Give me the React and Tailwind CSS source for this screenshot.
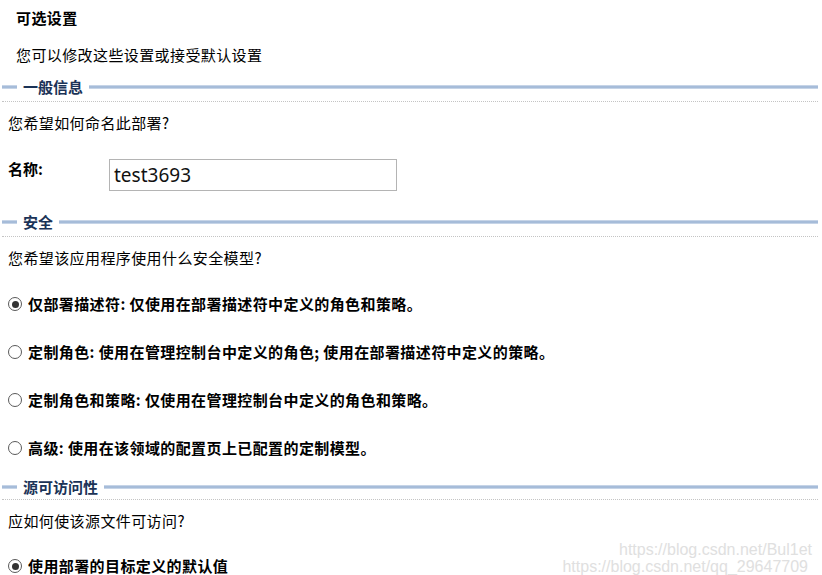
import React from "react";

const cjk = { fontFamily: '"Noto Sans CJK SC", "Noto Sans", sans-serif' };

function SectionHeader({ title, mb = "mb-[4px]" }) {
  return (
    <div className={`h-[20px] flex items-center pl-[2px] pr-[4px] ${mb}`}>
      <div className="w-[15px] h-[4px] bg-[#a6bcd9] border-y border-[#c6d4e7]" />
      <div className="px-[6px] text-[15px] leading-[20px] font-bold text-[#1b3357]">{title}</div>
      <div className="flex-1 h-[4px] bg-[#a6bcd9] border-y border-[#c6d4e7]" />
    </div>
  );
}

function Dotted() {
  return <div className="mx-[2px] mr-[4px] border-t border-dotted border-[#c4c4c4]" />;
}

function Radio({ checked, children, className = "" }) {
  return (
    <div className={`flex items-center h-[20px] pl-[8px] ${className}`}>
      <span className="w-[14px] h-[14px] rounded-full border border-[#5a5a5a] bg-white flex items-center justify-center">
        {checked && <span className="w-[7px] h-[7px] rounded-full bg-[#333]" />}
      </span>
      <span className="ml-[6px] text-[15px] leading-[20px] font-bold tracking-[0.4px] text-black">{children}</span>
    </div>
  );
}

export default function App() {
  return (
    <div className="relative w-[822px] h-[575px] overflow-hidden bg-white text-black" style={cjk}>
      <div className="pt-[8px]">
        <div className="pl-[16px] text-[15px] leading-[20px] font-bold tracking-[0.4px]">可选设置</div>
        <div className="pl-[16px] mt-[17px] text-[15px] leading-[20px] tracking-[0.4px]">您可以修改这些设置或接受默认设置</div>

        <div className="mt-[12px]">
          <SectionHeader title="一般信息" />
          <Dotted />
        </div>
        <div className="pl-[8px] mt-[11px] text-[15px] leading-[20px] tracking-[0.4px]">您希望如何命名此部署?</div>

        <div className="flex mt-[26px] h-[32px]">
          <div className="pl-[8px] w-[109px] text-[15px] leading-[20px] font-bold">名称:</div>
          <div
            className="w-[288px] h-[32px] border border-[#b4b4b4] flex items-center pl-[4px] pt-[1px] text-[19px] text-[#111]"
            style={{ fontFamily: '"Noto Sans", sans-serif' }}
          >
            test3693
          </div>
        </div>

        <div className="mt-[21px]">
          <SectionHeader title="安全" />
          <Dotted />
        </div>
        <div className="pl-[8px] mt-[11px] text-[15px] leading-[20px] tracking-[0.4px]">您希望该应用程序使用什么安全模型?</div>

        <Radio checked className="mt-[26px]">仅部署描述符: 仅使用在部署描述符中定义的角色和策略。</Radio>
        <Radio className="mt-[28px]">定制角色: 使用在管理控制台中定义的角色; 使用在部署描述符中定义的策略。</Radio>
        <Radio className="mt-[28px]">定制角色和策略: 仅使用在管理控制台中定义的角色和策略。</Radio>
        <Radio className="mt-[28px]">高级: 使用在该领域的配置页上已配置的定制模型。</Radio>

        <div className="mt-[19px]">
          <SectionHeader title="源可访问性" mb="mb-[2px]" />
          <Dotted />
        </div>
        <div className="pl-[8px] mt-[11px] text-[15px] leading-[20px] tracking-[0.4px]">应如何使该源文件可访问?</div>

        <Radio checked className="mt-[25px]">使用部署的目标定义的默认值</Radio>
      </div>

      <div
        className="absolute right-[10px] top-[541px] text-[16px] leading-[17px] text-[#e0e0e0] text-right"
        style={{ fontFamily: '"Liberation Sans", Arial, sans-serif' }}
      >
        <div>https://blog.csdn.net/Bul1et</div>
        <div className="mr-[4px]">https://blog.csdn.net/qq_29647709</div>
      </div>
    </div>
  );
}
